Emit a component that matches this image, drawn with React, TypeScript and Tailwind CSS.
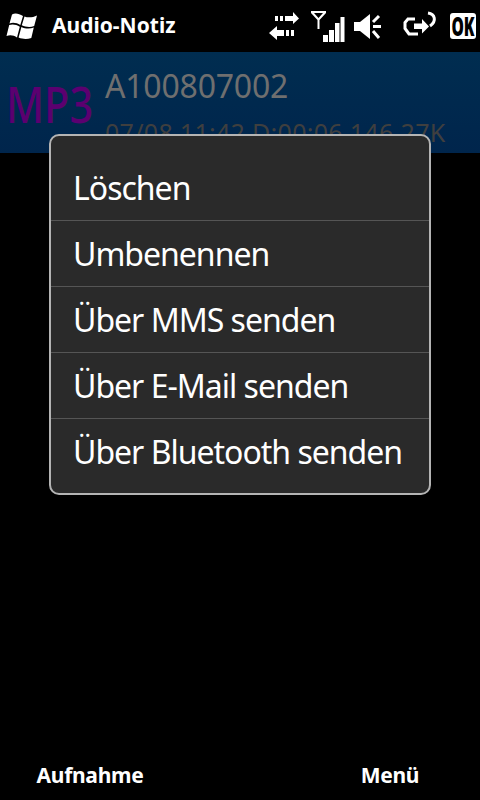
const font = { fontFamily: '"Noto Sans", sans-serif' };

function WinLogo() {
  return (
    <svg width="32" height="30" viewBox="0 0 32 30" className="ml-[5px] mt-[11px] shrink-0">
      <g fill="#fff">
        <path d="M7 3.500 C10 1.500 14 2.500 18 5 L15.300 14 C12 12 8 11 4.500 12.500 Z" />
        <path d="M19.500 5.500 C23 7 28 6.500 32 4.500 L29.200 15 C25.500 16.500 20.500 16 16.800 14.300 Z" />
        <path d="M4.200 14 C8 12.800 11.500 13.800 14.800 15.700 L12 26.500 C9 24.500 5.500 23.500 1.500 25 Z" />
        <path d="M16.400 16 C20 17.800 25 18 28.800 16.600 L26.300 27 C22 28.500 17.500 28.200 13.600 26.500 Z" />
      </g>
    </svg>
  );
}

function StatusIcons() {
  return (
    <svg width="181" height="44" viewBox="0 0 181 44" className="ml-auto shrink-0">
      <g fill="#fff">
        {/* data arrows */}
        <path d="M6 16h3v5H6zM11 16h3v5h-3zM16 16h8v-4l6 6.500-6 5.500v-3h-8z" />
        <path d="M0 33l8-7v4h7v6H8v4zM17 30h3v6h-3zM22 30h3v6h-3z" />
        {/* antenna */}
        <path d="M42 11h15v2l-6.500 7v9h-2v-9L42 13zM45 13l4.500 5 4.500-5z" fillRule="evenodd" />
        {/* bars */}
        <rect x="54" y="35" width="5" height="7" />
        <rect x="60" y="30" width="5" height="12" />
        <rect x="66" y="23" width="4.500" height="19" />
        <rect x="71.500" y="17" width="4" height="25" />
        {/* speaker */}
        <path d="M85 22h6l10-8v25l-10-8h-6z" />
      </g>
      <g stroke="#fff" strokeWidth="3" fill="none">
        <path d="M104 22l6-6M104 26.500h8M104 31l6 7" />
        {/* plug */}
        <path d="M146 19h-7l-3 3.500v6l4 5.500h9" />
        <path d="M159 13c7 1 9 8 2 13" />
      </g>
      <path d="M145 23.500h8v-4.500l7 7.500-7 7v-4.500h-8z" fill="#fff" />
    </svg>
  );
}

const items = ["Umbenennen", "Über MMS senden", "Über E-Mail senden", "Über Bluetooth senden"];

export default function App() {
  return (
    <div className="relative w-[480px] h-[800px] bg-black flex flex-col overflow-hidden" style={font}>
      <header className="h-[52px] flex items-start text-white shrink-0 pr-[4px]">
        <WinLogo />
        <span className="ml-[15px] mt-[12px] text-[21px] leading-[26px] font-bold">Audio-Notiz</span>
        <StatusIcons />
        <div className="mt-[13px] w-[26px] h-[26px] rounded-[3px] bg-white text-black flex items-center justify-center shrink-0">
          <span className="scale-x-[0.6] text-[26px] leading-[26px] font-black tracking-[-0.5px]">OK</span>
        </div>
      </header>

      <section className="h-[101px] bg-gradient-to-b from-[#002d50] to-[#00254c] flex shrink-0">
        <div className="w-[105px] shrink-0 pl-[6px] pt-[21px]">
          <div className="origin-left scale-x-[0.83] text-[#5b0070] text-[50px] leading-[62px] font-medium">MP3</div>
        </div>
        <div className="pt-[14px] min-w-0">
          <div className="text-[#6f6f6f] text-[32px] leading-[40px] tracking-[-0.2px] whitespace-nowrap">A100807002</div>
          <div className="mt-[10px] text-[#3f3f3f] text-[25px] leading-[32px] tracking-[0.3px] whitespace-nowrap">07/08 11:42 D:00:06 146.27K</div>
        </div>
      </section>

      <div className="flex-1" />

      <footer className="h-[50px] flex text-white font-bold text-[21px] tracking-[-0.3px] shrink-0">
        <div className="w-[180px] text-center leading-[50px]">Aufnahme</div>
        <div className="flex-1" />
        <div className="w-[180px] text-center leading-[50px]">Menü</div>
      </footer>

      <div className="absolute left-[49px] top-[134px] w-[382px] h-[361px] rounded-[10px] border-2 border-[#b4b4b4] bg-[#2a2a2a] flex flex-col text-white text-[32px] tracking-[-1px]">
        <div className="h-[85px] pl-[22px] pt-[32px] leading-[40px] border-b border-[#555555] box-border">Löschen</div>
        {items.map((t, i) => (
          <div key={t} className={`h-[66px] pl-[22px] pt-[13px] leading-[40px] box-border whitespace-nowrap ${i < 3 ? "border-b border-[#555555]" : ""}`}>{t}</div>
        ))}
      </div>
    </div>
  );
}
